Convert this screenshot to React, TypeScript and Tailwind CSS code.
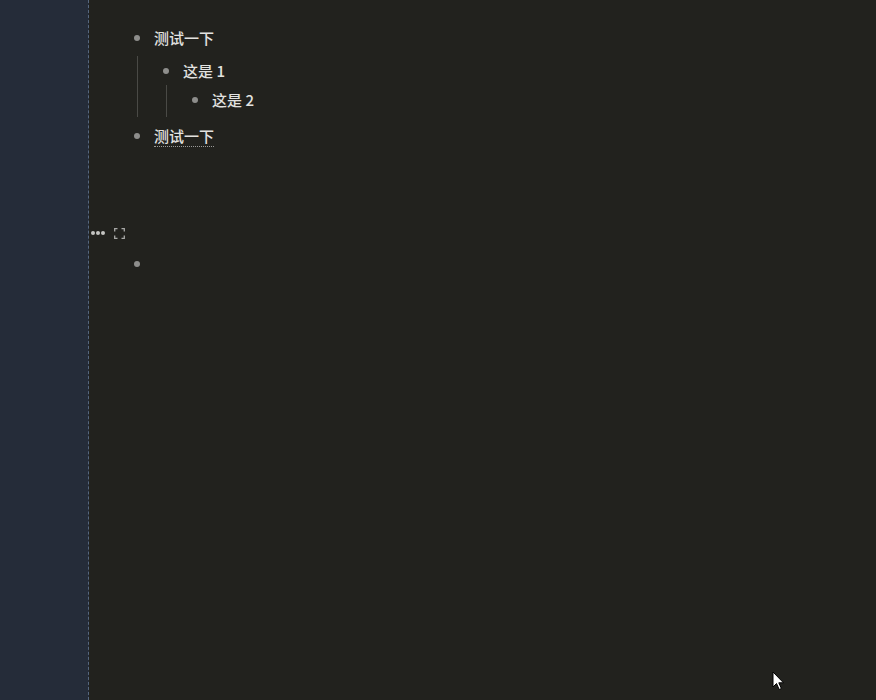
const Bullet = () => (
  <div className="w-[18px] flex justify-center items-center">
    <span className="block w-[6px] h-[6px] rounded-full bg-[#8e8e8c]" />
  </div>
);

const Row = ({ text, h = "h-[30px]", underline = false }: { text?: string; h?: string; underline?: boolean }) => (
  <div className={`flex items-center gap-2 ${h}`}>
    <Bullet />
    {text && (
      <span
        className={`text-[15px] leading-[20px] font-medium text-[#e2e2e0] ${
          underline ? "border-b border-dotted border-[#9a9a98]" : ""
        }`}
      >
        {text}
      </span>
    )}
  </div>
);

export default function App() {
  return (
    <div
      className="relative flex h-[700px] w-full bg-[#22221e] overflow-hidden"
      style={{ fontFamily: '"Noto Sans CJK SC", "Noto Sans", sans-serif' }}
    >
      <div className="w-[89px] shrink-0 bg-[#252c39] border-r border-dashed border-[#56677e]" />
      <div className="flex-1 flex flex-col pt-[23px]">
        <div className="pl-[39px]">
          <Row text="测试一下" />
          <div className="mt-[3px] ml-[9px] border-l border-[#4a4a46] pl-[19px]">
            <Row text="这是 1" h="h-[29px]" />
            <div className="ml-[9px] border-l border-[#4a4a46] pl-[19px] pb-[2px]">
              <Row text="这是 2" />
            </div>
          </div>
          <div className="mt-[4px]">
            <Row text="测试一下" underline />
          </div>
        </div>

        <div className="mt-[75px] h-[14px] flex items-center pl-[2px] gap-[9px]">
          <div className="flex gap-[1.5px]">
            <span className="block w-[3.5px] h-[3.5px] rounded-full bg-[#c4c4c2]" />
            <span className="block w-[3.5px] h-[3.5px] rounded-full bg-[#c4c4c2]" />
            <span className="block w-[3.5px] h-[3.5px] rounded-full bg-[#c4c4c2]" />
          </div>
          <svg width="11" height="11" viewBox="0 0 11 11" fill="none" stroke="#a8a8a6" strokeWidth="1.3">
            <path d="M0.7 3.5V0.7H3.5M7.5 0.7H10.3V3.5M10.3 7.5V10.3H7.5M3.5 10.3H0.7V7.5" />
          </svg>
        </div>

        <div className="mt-[9px] pl-[39px]">
          <Row />
        </div>
      </div>

      <svg className="absolute left-[772px] top-[671px]" width="14" height="20" viewBox="0 0 14 20">
        <path d="M1 1V16L4.5 12.5L7.2 18.5L9.4 17.5L6.8 11.8H11.5Z" fill="#fff" stroke="#000" strokeWidth="1" />
      </svg>
    </div>
  );
}
